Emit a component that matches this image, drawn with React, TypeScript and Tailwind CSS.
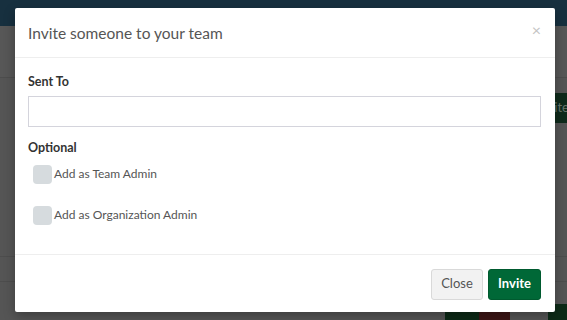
import React, { useState } from "react";

const font = { fontFamily: "Lato, 'Open Sans', sans-serif" };

const Checkbox: React.FC<{ label: string }> = ({ label }) => {
  const [on, setOn] = useState(false);
  return (
    <label className="flex items-center cursor-pointer">
      <span
        onClick={() => setOn(!on)}
        className={`w-[19px] h-[19px] rounded-[4px] ${on ? "bg-[#006837]" : "bg-[#d6dbde]"}`}
      />
      <span className="ml-[2px] text-[12px] text-[#555]">{label}</span>
    </label>
  );
};

export default function App() {
  return (
    <div className="relative w-[567px] h-[320px] overflow-hidden bg-[#555555]" style={font}>
      {/* page behind the backdrop */}
      <div className="h-[26px] bg-[#17303f]" />
      <div className="h-[52px] border-b border-[#4d4d4d] bg-[#575757]" />
      <div className="flex justify-end pt-[15px]">
        <div className="w-[48px] h-[30px] bg-[#0f2a1b] rounded-[3px] -mr-[16px] text-[13px] text-[#67756c] flex items-center pl-[2px]">
          Invite
        </div>
      </div>
      <div className="mt-[133px] border-t border-[#4d4d4d]" />
      <div className="mt-[24px] border-t border-[#4d4d4d]" />
      <div className="absolute left-0 right-0 top-[304px] flex">
        <div className="ml-[445px] w-[35px] h-[16px] bg-[#0d2a17]" />
        <div className="w-[32px] h-[16px] bg-[#3d1616]" />
        <div className="ml-[38px] w-[20px] h-[16px] bg-[#0d2a17]" />
      </div>

      {/* modal */}
      <div className="absolute left-[15px] top-[8px] w-[540px] h-[304px] bg-white rounded-[2px] shadow-[0_4px_12px_rgba(0,0,0,0.3)] flex flex-col">
        <div className="h-[50px] flex items-center justify-between px-[13px] border-b border-[#eeeeee]">
          <h4 className="text-[15.5px] text-[#555] pt-[2px]">Invite someone to your team</h4>
          <button className="text-[#c4c4c4] text-[16px] leading-none mr-[1px] -mt-[6px]">×</button>
        </div>
        <div className="flex-1 px-[13px] pt-[15px]">
          <div className="text-[12.5px] font-bold text-[#333]">Sent To</div>
          <input className="mt-[4px] w-[513px] h-[31px] border border-[#d4d4dc] px-2 text-[13px] outline-none" />
          <div className="mt-[12px] text-[12.5px] font-bold text-[#333]">Optional</div>
          <div className="mt-[7px] ml-[5px] flex flex-col gap-[22px]">
            <Checkbox label="Add as Team Admin" />
            <Checkbox label="Add as Organization Admin" />
          </div>
        </div>
        <div className="h-[58px] border-t border-[#eeeeee] flex items-center justify-end gap-[5px] px-[14px] pt-[1px]">
          <button className="w-[52px] h-[31px] rounded-[3px] border border-[#d9d9d9] bg-[#f2f2f2] text-[13px] text-[#555]">
            Close
          </button>
          <button className="w-[53px] h-[31px] rounded-[3px] border border-[#005a2f] bg-[#006837] text-[13px] font-bold text-white">
            Invite
          </button>
        </div>
      </div>
    </div>
  );
}
